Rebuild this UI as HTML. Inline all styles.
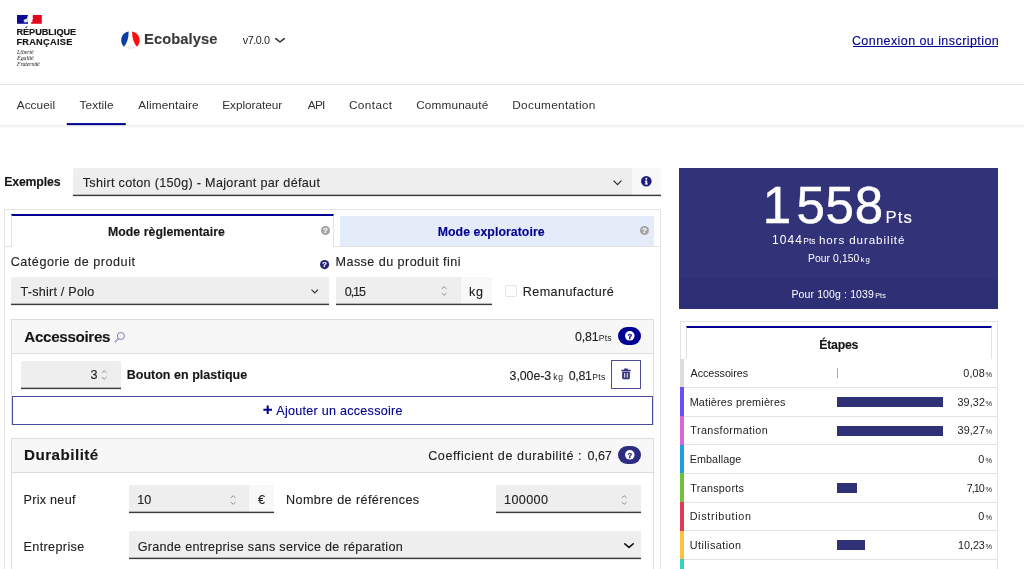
<!DOCTYPE html>
<html lang="fr"><head><meta charset="utf-8"><title>Ecobalyse</title>
<style>
html,body{margin:0;padding:0;background:#fff;width:1024px;height:569px;overflow:hidden;}
body{width:1024px;height:569px;position:relative;overflow:hidden;font-family:"Liberation Sans",sans-serif;}
.t{position:absolute;white-space:nowrap;line-height:1;-webkit-text-stroke:0.12px currentColor;}
.tx{position:absolute;left:0;top:0;width:1024px;height:569px;overflow:hidden;will-change:transform;}
.b{position:absolute;box-sizing:border-box;}
.f{background:#eee;box-shadow:0 1px 0 0 #e6e6e6,inset 0 -1px 0 0 #3a3a3a,inset 0 -2px 0 0 #b4b4b4;border-radius:3px 3px 0 0;}
.f2{background:#f8f8f8;box-shadow:0 1px 0 0 #e6e6e6,inset 0 -1px 0 0 #3a3a3a,inset 0 -2px 0 0 #bbb;border-radius:0 3px 0 0;}
.card{border:1px solid #ddd;background:#fff;}
.hd{background:#f7f7f7;border-bottom:1px solid #ddd;}
svg{position:absolute;overflow:visible;}

.big::first-letter{letter-spacing:5.230px;}
</style></head><body>
<div class="tx">
<!-- header -->
<div class="b" style="left:0;top:84px;width:1024px;height:1px;background:#e4e4e4"></div>
<svg style="left:17.1px;top:14.9px" width="24.8" height="8.8" viewBox="0 0 24.8 8.8"><rect x="0" y="0" width="10.9" height="8.8" fill="#0a0a96"/><path d="M10.9 0.6 L10 2.4 L9.8 3.8 L7.4 4.4 L6.2 5.9 L7.8 6 L6.4 7.3 L8.4 7.5 L10.9 7 Z" fill="#e8e8fa"/><path d="M16 0 H24.8 V8.8 H13.9 L14.2 7.4 L15.7 6.6 L15.2 5 L16.1 3.8 L15.6 2 Z" fill="#e3061a"/></svg>
<svg style="left:121.2px;top:30.5px" width="19" height="19" viewBox="0 0 19 19"><circle cx="9.4" cy="9.2" r="9" fill="#fcfcfc"/><ellipse cx="9.4" cy="16.2" rx="4.2" ry="1.6" fill="#eef0ea"/><path d="M7.6 0.4 A9 9 0 0 0 2.9 15.7 Q7.9 9.5 7.6 0.4Z" fill="#0b3ea5"/><path d="M11.1 0.4 A9 9 0 0 1 15.9 15.7 Q10.9 9.5 11.1 0.4Z" fill="#fa0d0d"/></svg>
<svg style="left:275px;top:37.6px" width="10" height="5" viewBox="0 0 10 5"><path d="M0.7 0.7 L5 4 L9.3 0.7" fill="none" stroke="#2a2a2a" stroke-width="1.5" stroke-linecap="round" stroke-linejoin="round"/></svg>
<div class="b" style="left:852.5px;top:46.4px;width:145.5px;height:1px;background:#000091"></div>
<!-- nav -->
<div class="b" style="left:0;top:125px;width:1024px;height:3px;background:linear-gradient(#ebebeb,#f5f5f5 60%,#fff)"></div>
<svg style="left:0;top:0" width="200" height="130"><rect x="66.8" y="123.1" width="59" height="2" fill="#000091"/></svg>
<!-- exemples -->
<div class="b f" style="left:73px;top:168px;width:559px;height:28px;border-radius:3px 0 0 0"></div>
<div class="b f2" style="left:632px;top:168px;width:29px;height:28px"></div>
<svg style="left:612.5px;top:180px" width="9" height="5.5" viewBox="0 0 9 5.5"><path d="M0.6 0.6 L4.5 4.6 L8.4 0.6" fill="none" stroke="#2a2a2a" stroke-width="1.2"/></svg>
<svg style="left:640.7px;top:176.2px" width="10.6" height="10.6" viewBox="0 0 16 16"><circle cx="8" cy="8" r="8" fill="#1b1b7f"/><circle cx="8" cy="4.2" r="1.5" fill="#fff"/><path d="M5.8 6.8 H9.4 V11.4 H10.6 V12.8 H5.6 V11.4 H6.8 V8.2 H5.8Z" fill="#fff"/></svg>
<!-- main card -->
<div class="b card" style="left:4px;top:209px;width:657px;height:400px;border-color:#e4e4e4"></div>
<div class="b" style="left:5px;top:246px;width:655px;height:1px;background:#e2e2e2"></div>
<div class="b" style="left:11px;top:214px;width:323px;height:33px;background:#fff;border-top:2px solid #000091;border-left:1px solid #e4e4e4;border-right:1px solid #e4e4e4"></div>
<div class="b" style="left:340px;top:216px;width:314px;height:30px;background:#e4ecfa"></div>
<svg style="left:320.6px;top:225.9px" width="9" height="9" viewBox="0 0 16 16"><circle cx="8" cy="8" r="8" fill="#a4a4a4"/><text x="8" y="12.6" font-family="Liberation Sans, sans-serif" font-weight="700" font-size="13" text-anchor="middle" fill="#fff" stroke="#fff" stroke-width="0.4">?</text></svg>
<svg style="left:640.4px;top:225.9px" width="9" height="9" viewBox="0 0 16 16"><circle cx="8" cy="8" r="8" fill="#a4a4a4"/><text x="8" y="12.6" font-family="Liberation Sans, sans-serif" font-weight="700" font-size="13" text-anchor="middle" fill="#fff" stroke="#fff" stroke-width="0.4">?</text></svg>
<svg style="left:319.7px;top:260.1px" width="9.2" height="9.2" viewBox="0 0 16 16"><circle cx="8" cy="8" r="8" fill="#27277a"/><text x="8" y="12.6" font-family="Liberation Sans, sans-serif" font-weight="700" font-size="13" text-anchor="middle" fill="#fff" stroke="#fff" stroke-width="0.4">?</text></svg>
<!-- row 1 fields -->
<div class="b f" style="left:11px;top:277px;width:318.3px;height:28px"></div>
<svg style="left:310.5px;top:288.6px" width="7.5" height="5" viewBox="0 0 7.5 5"><path d="M0.5 0.6 L3.75 4 L7 0.6" fill="none" stroke="#2a2a2a" stroke-width="1.1"/></svg>
<div class="b f" style="left:336px;top:277px;width:125px;height:28px;border-radius:3px 0 0 0"></div>
<div class="b f2" style="left:461px;top:277px;width:31px;height:28px"></div>
<svg style="left:441px;top:286.2px" width="6.4" height="10" viewBox="0 0 6.4 10"><path d="M0.8 2.9 L3.2 0.7 L5.6 2.9 M0.8 7.1 L3.2 9.3 L5.6 7.1" fill="none" stroke="#858585" stroke-width="0.9"/></svg>
<div class="b" style="left:505px;top:285px;width:12px;height:12px;border:1px solid #e4e4e4;border-radius:2px;background:#fff"></div>
<!-- accessoires -->
<div class="b card" style="left:11px;top:319px;width:643px;height:106px"></div>
<div class="b hd" style="left:12px;top:320px;width:641px;height:34px"></div>
<svg style="left:114px;top:331.5px" width="11" height="11" viewBox="0 0 11 11"><circle cx="6.9" cy="4" r="3.5" fill="none" stroke="#7474ae" stroke-width="0.9"/><path d="M4.2 6.1 L5 6.9 L1.5 10.4 L0.7 9.6Z" fill="#e4e4f4" stroke="#7474ae" stroke-width="0.7"/></svg>
<div class="b" style="left:617.8px;top:327.2px;width:23.1px;height:18px;border-radius:9px;background:#000091"></div>
<svg style="left:624.6px;top:331.4px" width="9.6" height="9.6" viewBox="0 0 16 16"><circle cx="8" cy="8" r="8" fill="#fff"/><text x="8" y="12.6" font-family="Liberation Sans, sans-serif" font-weight="700" font-size="13" text-anchor="middle" fill="#000091" stroke="#000091" stroke-width="0.5">?</text></svg>
<div class="b f" style="left:21.3px;top:361px;width:99.5px;height:28px"></div>
<svg style="left:101.4px;top:369.5px" width="6.4" height="10" viewBox="0 0 6.4 10"><path d="M0.8 2.9 L3.2 0.7 L5.6 2.9 M0.8 7.1 L3.2 9.3 L5.6 7.1" fill="none" stroke="#858585" stroke-width="0.9"/></svg>
<div class="b" style="left:611px;top:360px;width:30px;height:29px;border:1px solid #4d4d96;background:#fff"></div>
<svg style="left:621.4px;top:368.1px" width="10" height="11.4" viewBox="0 0 14 16"><path d="M0.4 2.6 H13.6 V4.6 H0.4Z M4.4 0.6 H9.6 V2.6 H4.4Z M1.6 5.2 H12.4 V14.2 Q12.4 15.8 10.8 15.8 H3.2 Q1.6 15.8 1.6 14.2Z" fill="#35357f"/><path d="M5.2 7 V13.6 M8.8 7 V13.6" stroke="#fff" stroke-width="1.3"/></svg>
<div class="b" style="left:12px;top:396px;width:641px;height:29px;border:1px solid #4a4aa2;background:#fff"></div>
<svg style="left:262.6px;top:405.4px" width="9.4" height="9.4" viewBox="0 0 10 10"><path d="M5 0.4 V9.6 M0.4 5 H9.6" stroke="#000091" stroke-width="2.2"/></svg>
<!-- durabilite -->
<div class="b card" style="left:11px;top:438px;width:643px;height:200px"></div>
<div class="b hd" style="left:12px;top:439px;width:641px;height:34px"></div>
<div class="b" style="left:617.8px;top:446.2px;width:23.1px;height:18px;border-radius:9px;background:#2c2c80"></div>
<svg style="left:624.6px;top:450.4px" width="9.6" height="9.6" viewBox="0 0 16 16"><circle cx="8" cy="8" r="8" fill="#fff"/><text x="8" y="12.6" font-family="Liberation Sans, sans-serif" font-weight="700" font-size="13" text-anchor="middle" fill="#2c2c80" stroke="#2c2c80" stroke-width="0.5">?</text></svg>
<div class="b f" style="left:128.8px;top:485px;width:120px;height:28px;border-radius:3px 0 0 0"></div>
<div class="b f2" style="left:248.8px;top:485px;width:25px;height:28px"></div>
<svg style="left:229.7px;top:494.5px" width="6.4" height="10" viewBox="0 0 6.4 10"><path d="M0.8 2.9 L3.2 0.7 L5.6 2.9 M0.8 7.1 L3.2 9.3 L5.6 7.1" fill="none" stroke="#858585" stroke-width="0.9"/></svg>
<div class="b f" style="left:496.3px;top:485px;width:144.5px;height:28px"></div>
<svg style="left:621.4px;top:494.5px" width="6.4" height="10" viewBox="0 0 6.4 10"><path d="M0.8 2.9 L3.2 0.7 L5.6 2.9 M0.8 7.1 L3.2 9.3 L5.6 7.1" fill="none" stroke="#858585" stroke-width="0.9"/></svg>
<div class="b f" style="left:128.8px;top:531px;width:512px;height:28px"></div>
<svg style="left:623.7px;top:542.8px" width="10" height="5.4" viewBox="0 0 10 5.4"><path d="M0.8 0.8 L5 4.4 L9.2 0.8" fill="none" stroke="#161616" stroke-width="1.6" stroke-linecap="round" stroke-linejoin="round"/></svg>
<!-- score -->
<div class="b" style="left:679px;top:168px;width:319px;height:141px;background:#323279"></div>
<div class="b" style="left:679px;top:277.5px;width:319px;height:31.5px;background:#2f2f75"></div>
<!-- etapes -->
<div class="b card" style="left:679.5px;top:321px;width:318.5px;height:300px;border-color:#e4e4e4"></div>
<div class="b" style="left:686px;top:326px;width:306px;height:32.7px;background:#fff;border-top:2px solid #000091;border-left:1px solid #e4e4e4;border-right:1px solid #e4e4e4"></div>
<!-- rows -->
<div class="b" style="left:680px;top:358.67px;width:4px;height:28.67px;background:#dcdcdc"></div>
<div class="b" style="left:684px;top:386.84px;width:313.5px;height:1px;background:#e2e2e2"></div>
<div class="b" style="left:837px;top:368.47px;width:1px;height:10px;background:#aaa"></div>
<div class="b" style="left:680px;top:387.34px;width:4px;height:28.67px;background:#6c4ef6"></div>
<div class="b" style="left:684px;top:415.51px;width:313.5px;height:1px;background:#e2e2e2"></div>
<div class="b" style="left:837px;top:397.14px;width:106px;height:10px;background:#313178"></div>
<div class="b" style="left:680px;top:416.01px;width:4px;height:28.67px;background:#d966d9"></div>
<div class="b" style="left:684px;top:444.18px;width:313.5px;height:1px;background:#e2e2e2"></div>
<div class="b" style="left:837px;top:425.81px;width:106px;height:10px;background:#313178"></div>
<div class="b" style="left:680px;top:444.68px;width:4px;height:28.67px;background:#1f9fe0"></div>
<div class="b" style="left:684px;top:472.85px;width:313.5px;height:1px;background:#e2e2e2"></div>
<div class="b" style="left:680px;top:473.35px;width:4px;height:28.67px;background:#72c03c"></div>
<div class="b" style="left:684px;top:501.52px;width:313.5px;height:1px;background:#e2e2e2"></div>
<div class="b" style="left:837px;top:483.15px;width:19.5px;height:10px;background:#313178"></div>
<div class="b" style="left:680px;top:502.02px;width:4px;height:28.67px;background:#e23b5a"></div>
<div class="b" style="left:684px;top:530.19px;width:313.5px;height:1px;background:#e2e2e2"></div>
<div class="b" style="left:680px;top:530.69px;width:4px;height:28.67px;background:#fcc43c"></div>
<div class="b" style="left:684px;top:558.86px;width:313.5px;height:1px;background:#e2e2e2"></div>
<div class="b" style="left:837px;top:540.49px;width:27.8px;height:10px;background:#313178"></div>
<div class="b" style="left:680px;top:559.36px;width:4px;height:28.67px;background:#2fd3c0"></div>
<div class="b" style="left:684px;top:587.53px;width:313.5px;height:1px;background:#e2e2e2"></div>

<span class="t" style="left:16.40px;top:28.00px;font:700 9.2px/1 'Liberation Sans', sans-serif;color:#161616;-webkit-text-stroke:0.15px #161616;letter-spacing:-0.042px;">RÉPUBLIQUE</span>
<span class="t" style="left:16.40px;top:38.00px;font:700 9.2px/1 'Liberation Sans', sans-serif;color:#161616;-webkit-text-stroke:0.15px #161616;letter-spacing:0.284px;">FRANÇAISE</span>
<span class="t" style="left:17.10px;top:50.00px;font:400 5.9px/1 'Liberation Serif', serif;color:#222;font-style:italic;-webkit-text-stroke:0;letter-spacing:-0.062px;">Liberté</span>
<span class="t" style="left:17.10px;top:56.00px;font:400 5.9px/1 'Liberation Serif', serif;color:#222;font-style:italic;-webkit-text-stroke:0;letter-spacing:-0.062px;">Égalité</span>
<span class="t" style="left:17.05px;top:62.00px;font:400 5.9px/1 'Liberation Serif', serif;color:#222;font-style:italic;-webkit-text-stroke:0;letter-spacing:-0.170px;">Fraternité</span>
<span class="t" style="left:144.08px;top:32.00px;font:700 14.7px/1 'Liberation Sans', sans-serif;color:#3a3a3a;letter-spacing:0.070px;">Ecobalyse</span>
<span class="t" style="left:242.70px;top:35.00px;font:400 10.8px/1 'Liberation Sans', sans-serif;color:#222;-webkit-text-stroke:0;letter-spacing:-0.443px;">v7.0.0</span>
<span class="t" style="left:851.90px;top:35.00px;font:400 12.5px/1 'Liberation Sans', sans-serif;color:#000091;letter-spacing:0.435px;">Connexion ou inscription</span>
<span class="t" style="left:16.75px;top:100.00px;font:400 11.8px/1 'Liberation Sans', sans-serif;color:#303030;-webkit-text-stroke:0;letter-spacing:0.039px;">Accueil</span>
<span class="t" style="left:79.50px;top:100.00px;font:400 11.8px/1 'Liberation Sans', sans-serif;color:#303030;-webkit-text-stroke:0;letter-spacing:0.094px;">Textile</span>
<span class="t" style="left:138.25px;top:100.00px;font:400 11.8px/1 'Liberation Sans', sans-serif;color:#303030;-webkit-text-stroke:0;letter-spacing:0.124px;">Alimentaire</span>
<span class="t" style="left:222.30px;top:100.00px;font:400 11.8px/1 'Liberation Sans', sans-serif;color:#303030;-webkit-text-stroke:0;letter-spacing:-0.046px;">Explorateur</span>
<span class="t" style="left:307.75px;top:100.00px;font:400 11.8px/1 'Liberation Sans', sans-serif;color:#303030;-webkit-text-stroke:0;letter-spacing:-0.721px;">API</span>
<span class="t" style="left:348.95px;top:100.00px;font:400 11.8px/1 'Liberation Sans', sans-serif;color:#303030;-webkit-text-stroke:0;letter-spacing:0.410px;">Contact</span>
<span class="t" style="left:416.20px;top:100.00px;font:400 11.8px/1 'Liberation Sans', sans-serif;color:#303030;-webkit-text-stroke:0;letter-spacing:0.136px;">Communauté</span>
<span class="t" style="left:512.30px;top:100.00px;font:400 11.8px/1 'Liberation Sans', sans-serif;color:#303030;-webkit-text-stroke:0;letter-spacing:0.300px;">Documentation</span>
<span class="t" style="left:4.20px;top:176.00px;font:700 12.3px/1 'Liberation Sans', sans-serif;color:#161616;letter-spacing:-0.163px;">Exemples</span>
<span class="t" style="left:82.75px;top:177.00px;font:400 12.6px/1 'Liberation Sans', sans-serif;color:#222;letter-spacing:0.312px;">Tshirt coton (150g) - Majorant par défaut</span>
<span class="t" style="left:107.95px;top:226.00px;font:700 12.3px/1 'Liberation Sans', sans-serif;color:#161616;letter-spacing:0.043px;">Mode règlementaire</span>
<span class="t" style="left:437.70px;top:226.00px;font:700 12.3px/1 'Liberation Sans', sans-serif;color:#000091;letter-spacing:0.063px;">Mode exploratoire</span>
<span class="t" style="left:10.65px;top:256.00px;font:400 12.6px/1 'Liberation Sans', sans-serif;color:#222;letter-spacing:0.538px;">Catégorie de produit</span>
<span class="t" style="left:335.50px;top:256.00px;font:400 12.6px/1 'Liberation Sans', sans-serif;color:#222;letter-spacing:0.442px;">Masse du produit fini</span>
<span class="t" style="left:20.50px;top:286.00px;font:400 12.6px/1 'Liberation Sans', sans-serif;color:#222;letter-spacing:0.234px;">T-shirt / Polo</span>
<span class="t" style="left:344.80px;top:286.00px;font:400 12.6px/1 'Liberation Sans', sans-serif;color:#222;letter-spacing:-1.105px;">0,15</span>
<span class="t" style="left:468.95px;top:286.00px;font:400 12.6px/1 'Liberation Sans', sans-serif;color:#222;letter-spacing:0.800px;">kg</span>
<span class="t" style="left:522.75px;top:286.00px;font:400 12.6px/1 'Liberation Sans', sans-serif;color:#222;letter-spacing:0.409px;">Remanufacturé</span>
<span class="t" style="left:24.26px;top:329.00px;font:700 15.2px/1 'Liberation Sans', sans-serif;color:#161616;letter-spacing:-0.322px;">Accessoires</span>
<span class="t" style="left:575.05px;top:331.00px;font:400 12.4px/1 'Liberation Sans', sans-serif;color:#222;letter-spacing:-0.196px;">0,81</span>
<span class="t" style="left:598.80px;top:334.00px;font:400 8.6px/1 'Liberation Sans', sans-serif;color:#222;-webkit-text-stroke:0;letter-spacing:0.162px;">Pts</span>
<span class="t" style="left:90.40px;top:369.00px;font:400 12.6px/1 'Liberation Sans', sans-serif;color:#222;letter-spacing:0.000px;">3</span>
<span class="t" style="left:126.70px;top:369.00px;font:700 12.5px/1 'Liberation Sans', sans-serif;color:#161616;letter-spacing:0.018px;">Bouton en plastique</span>
<span class="t" style="left:509.55px;top:370.00px;font:400 12.4px/1 'Liberation Sans', sans-serif;color:#222;letter-spacing:-0.060px;">3,00e-3</span>
<span class="t" style="left:553.20px;top:373.00px;font:400 8.6px/1 'Liberation Sans', sans-serif;color:#222;-webkit-text-stroke:0;letter-spacing:0.750px;">kg</span>
<span class="t" style="left:568.80px;top:370.00px;font:400 12.4px/1 'Liberation Sans', sans-serif;color:#222;letter-spacing:-0.363px;">0,81</span>
<span class="t" style="left:592.30px;top:373.00px;font:400 8.6px/1 'Liberation Sans', sans-serif;color:#222;-webkit-text-stroke:0;letter-spacing:0.287px;">Pts</span>
<span class="t" style="left:276.25px;top:405.00px;font:400 12.6px/1 'Liberation Sans', sans-serif;color:#000091;letter-spacing:0.257px;">Ajouter un accessoire</span>
<span class="t" style="left:24.05px;top:447.00px;font:700 15.2px/1 'Liberation Sans', sans-serif;color:#161616;letter-spacing:0.470px;">Durabilité</span>
<span class="t" style="left:428.15px;top:450.00px;font:400 12.6px/1 'Liberation Sans', sans-serif;color:#222;letter-spacing:0.579px;">Coefficient de durabilité :</span>
<span class="t" style="left:587.55px;top:450.00px;font:400 12.6px/1 'Liberation Sans', sans-serif;color:#222;letter-spacing:-0.072px;">0,67</span>
<span class="t" style="left:23.50px;top:494.00px;font:400 12.6px/1 'Liberation Sans', sans-serif;color:#222;letter-spacing:0.278px;">Prix neuf</span>
<span class="t" style="left:137.30px;top:494.00px;font:400 12.6px/1 'Liberation Sans', sans-serif;color:#222;letter-spacing:-0.108px;">10</span>
<span class="t" style="left:258.05px;top:494.00px;font:400 12.6px/1 'Liberation Sans', sans-serif;color:#222;letter-spacing:0.000px;">€</span>
<span class="t" style="left:286.00px;top:494.00px;font:400 12.6px/1 'Liberation Sans', sans-serif;color:#222;letter-spacing:0.413px;">Nombre de références</span>
<span class="t" style="left:504.05px;top:494.00px;font:400 12.6px/1 'Liberation Sans', sans-serif;color:#222;letter-spacing:0.372px;">100000</span>
<span class="t" style="left:23.50px;top:541.00px;font:400 12.6px/1 'Liberation Sans', sans-serif;color:#222;letter-spacing:0.376px;">Entreprise</span>
<span class="t" style="left:137.65px;top:541.00px;font:400 12.6px/1 'Liberation Sans', sans-serif;color:#222;letter-spacing:0.287px;">Grande entreprise sans service de réparation</span>
<span class="t big" style="left:762.81px;top:180.00px;font:400 51px/1 'Liberation Sans', sans-serif;color:#fff;-webkit-text-stroke:0.5px #fff;letter-spacing:0.785px;">1558</span>
<span class="t" style="left:885.59px;top:210.00px;font:400 16.8px/1 'Liberation Sans', sans-serif;color:#fff;letter-spacing:0.982px;">Pts</span>
<span class="t" style="left:771.90px;top:234.00px;font:400 12px/1 'Liberation Sans', sans-serif;color:#fff;-webkit-text-stroke:0;letter-spacing:1.076px;">1044</span>
<span class="t" style="left:803.35px;top:237.00px;font:400 8.4px/1 'Liberation Sans', sans-serif;color:#fff;-webkit-text-stroke:0;letter-spacing:0.007px;">Pts</span>
<span class="t" style="left:818.90px;top:234.00px;font:400 11.6px/1 'Liberation Sans', sans-serif;color:#fff;-webkit-text-stroke:0;letter-spacing:0.910px;">hors durabilité</span>
<span class="t" style="left:807.95px;top:254.00px;font:400 10.3px/1 'Liberation Sans', sans-serif;color:#fff;-webkit-text-stroke:0;letter-spacing:0.115px;">Pour 0,150</span>
<span class="t" style="left:860.50px;top:256.00px;font:400 7.8px/1 'Liberation Sans', sans-serif;color:#fff;-webkit-text-stroke:0;letter-spacing:1.050px;">kg</span>
<span class="t" style="left:791.45px;top:289.00px;font:400 10.5px/1 'Liberation Sans', sans-serif;color:#fff;-webkit-text-stroke:0;letter-spacing:0.125px;">Pour 100g : 1039</span>
<span class="t" style="left:875.15px;top:292.00px;font:400 7.2px/1 'Liberation Sans', sans-serif;color:#fff;-webkit-text-stroke:0;letter-spacing:0.099px;">Pts</span>
<span class="t" style="left:819.20px;top:339.00px;font:700 12.3px/1 'Liberation Sans', sans-serif;color:#161616;letter-spacing:-0.229px;">Étapes</span>
<span class="t" style="left:690.50px;top:368.00px;font:400 10.8px/1 'Liberation Sans', sans-serif;color:#222;-webkit-text-stroke:0;letter-spacing:-0.067px;">Accessoires</span>
<span class="t" style="left:963.20px;top:368.00px;font:400 10.8px/1 'Liberation Sans', sans-serif;color:#222;-webkit-text-stroke:0;letter-spacing:0.212px;">0,08</span>
<span class="t" style="left:985.40px;top:371.00px;font:400 7.4px/1 'Liberation Sans', sans-serif;color:#222;-webkit-text-stroke:0;letter-spacing:0.000px;">%</span>
<span class="t" style="left:689.65px;top:397.00px;font:400 10.8px/1 'Liberation Sans', sans-serif;color:#222;-webkit-text-stroke:0;letter-spacing:0.204px;">Matières premières</span>
<span class="t" style="left:957.40px;top:397.00px;font:400 10.8px/1 'Liberation Sans', sans-serif;color:#222;-webkit-text-stroke:0;letter-spacing:0.120px;">39,32</span>
<span class="t" style="left:985.40px;top:400.00px;font:400 7.4px/1 'Liberation Sans', sans-serif;color:#222;-webkit-text-stroke:0;letter-spacing:0.000px;">%</span>
<span class="t" style="left:690.30px;top:425.00px;font:400 10.8px/1 'Liberation Sans', sans-serif;color:#222;-webkit-text-stroke:0;letter-spacing:0.402px;">Transformation</span>
<span class="t" style="left:957.60px;top:425.00px;font:400 10.8px/1 'Liberation Sans', sans-serif;color:#222;-webkit-text-stroke:0;letter-spacing:0.070px;">39,27</span>
<span class="t" style="left:985.40px;top:428.00px;font:400 7.4px/1 'Liberation Sans', sans-serif;color:#222;-webkit-text-stroke:0;letter-spacing:0.000px;">%</span>
<span class="t" style="left:689.65px;top:454.00px;font:400 10.8px/1 'Liberation Sans', sans-serif;color:#222;-webkit-text-stroke:0;letter-spacing:0.084px;">Emballage</span>
<span class="t" style="left:978.35px;top:454.00px;font:400 10.8px/1 'Liberation Sans', sans-serif;color:#222;-webkit-text-stroke:0;letter-spacing:0.000px;">0</span>
<span class="t" style="left:985.40px;top:457.00px;font:400 7.4px/1 'Liberation Sans', sans-serif;color:#222;-webkit-text-stroke:0;letter-spacing:0.000px;">%</span>
<span class="t" style="left:690.30px;top:483.00px;font:400 10.8px/1 'Liberation Sans', sans-serif;color:#222;-webkit-text-stroke:0;letter-spacing:0.270px;">Transports</span>
<span class="t" style="left:966.85px;top:483.00px;font:400 10.8px/1 'Liberation Sans', sans-serif;color:#222;-webkit-text-stroke:0;letter-spacing:-1.021px;">7,10</span>
<span class="t" style="left:985.40px;top:486.00px;font:400 7.4px/1 'Liberation Sans', sans-serif;color:#222;-webkit-text-stroke:0;letter-spacing:0.000px;">%</span>
<span class="t" style="left:689.65px;top:511.00px;font:400 10.8px/1 'Liberation Sans', sans-serif;color:#222;-webkit-text-stroke:0;letter-spacing:0.671px;">Distribution</span>
<span class="t" style="left:978.35px;top:511.00px;font:400 10.8px/1 'Liberation Sans', sans-serif;color:#222;-webkit-text-stroke:0;letter-spacing:0.000px;">0</span>
<span class="t" style="left:985.40px;top:514.00px;font:400 7.4px/1 'Liberation Sans', sans-serif;color:#222;-webkit-text-stroke:0;letter-spacing:0.000px;">%</span>
<span class="t" style="left:689.70px;top:540.00px;font:400 10.8px/1 'Liberation Sans', sans-serif;color:#222;-webkit-text-stroke:0;letter-spacing:0.454px;">Utilisation</span>
<span class="t" style="left:958.00px;top:540.00px;font:400 10.8px/1 'Liberation Sans', sans-serif;color:#222;-webkit-text-stroke:0;letter-spacing:-0.042px;">10,23</span>
<span class="t" style="left:985.40px;top:543.00px;font:400 7.4px/1 'Liberation Sans', sans-serif;color:#222;-webkit-text-stroke:0;letter-spacing:0.000px;">%</span>
</div>
</body></html>
